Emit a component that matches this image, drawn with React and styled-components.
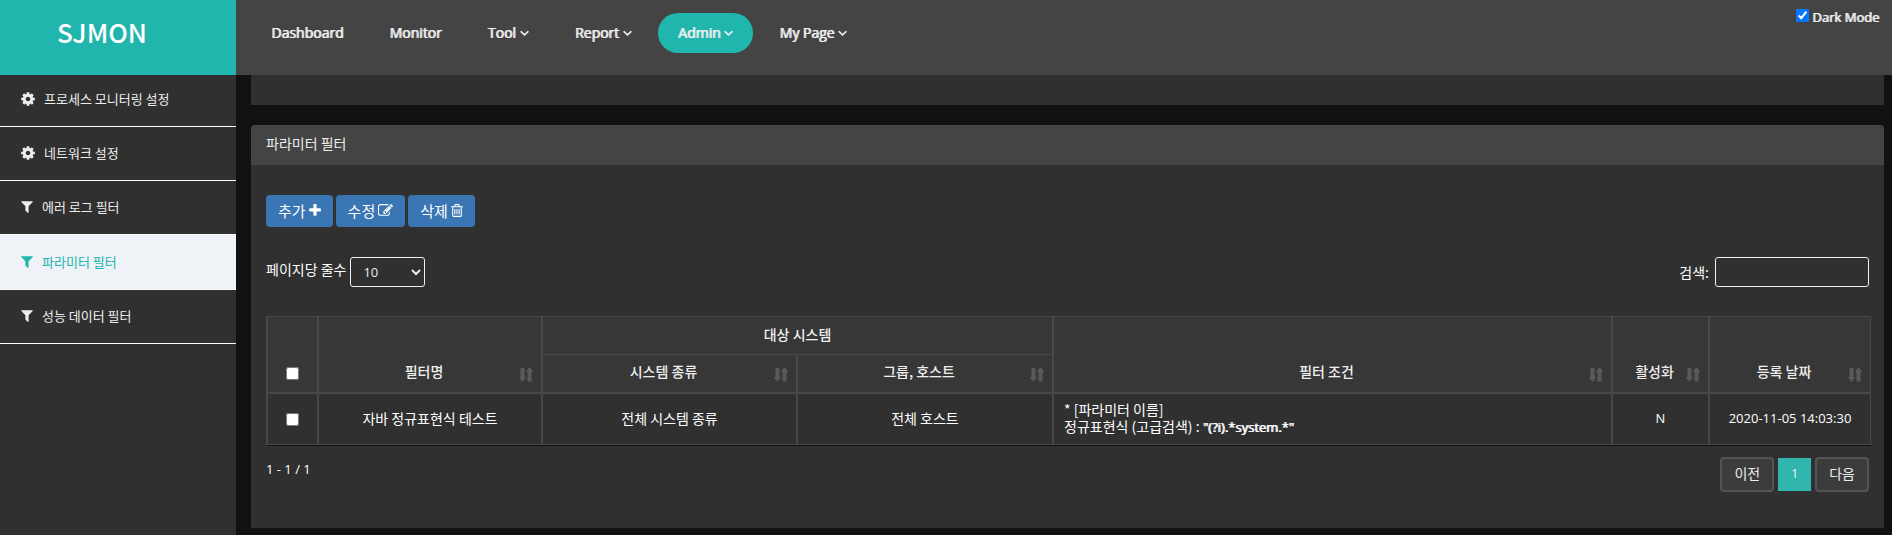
import React from "react";
import styled, { createGlobalStyle, css } from "styled-components";

const teal = "#20b5ad";
const latin = '"Open Sans", "Noto Sans CJK KR", sans-serif';
const korean = '"Noto Sans CJK KR", "Open Sans", sans-serif';

const GlobalStyle = createGlobalStyle`
  * { box-sizing: border-box; }
  body {
    margin: 0;
    background: #111;
    color: #fff;
    font: 14px/17px ${korean};
  }
  ul { list-style: none; margin: 0; padding: 0; }
  a { color: inherit; text-decoration: none; }
  svg { display: block; flex: none; fill: currentColor; }
`;

/* Icons: 1792 units to the em, cropped to the advance width of each glyph */
const shapes = {
  cog: [1536, "M1152 896q0-106-75-181t-181-75-181 75-75 181 75 181 181 75 181-75 75-181zm512-109v222q0 12-8 23t-20 13l-185 28q-19 54-39 91 35 50 107 138 10 12 10 25t-9 23q-27 37-99 108t-94 71q-12 0-26-9l-138-108q-44 23-91 38-16 136-29 186-7 28-36 28h-222q-14 0-24.5-8.5t-11.5-21.5l-28-184q-49-16-90-37l-141 107q-10 9-25 9-14 0-25-11-126-114-165-168-7-10-7-23 0-12 8-23 15-21 51-66.5t54-70.5q-27-50-41-99l-183-27q-13-2-21-12.5t-8-23.5v-222q0-12 8-23t19-13l186-28q14-46 39-92-40-57-107-138-10-12-10-24 0-10 9-23 26-36 98.5-107.5t94.5-71.5q13 0 26 10l138 107q44-23 91-38 16-136 29-186 7-28 36-28h222q14 0 24.5 8.5t11.5 21.5l28 184q49 16 90 37l142-107q9-9 24-9 13 0 25 10 129 119 165 170 7 8 7 22 0 12-8 23-15 21-51 66.5t-54 70.5q26 50 41 98l183 28q13 2 21 12.5t8 23.5z"],
  filter: [1408, "M1595 295q17 41-14 70l-493 493v742q0 42-39 59-13 5-25 5-27 0-45-19l-256-256q-19-19-19-45v-486l-493-493q-31-29-14-70 17-39 59-39h1280q42 0 59 39z"],
  plus: [1408, "M1600 736v192q0 40-28 68t-68 28h-416v416q0 40-28 68t-68 28h-192q-40 0-68-28t-28-68v-416h-416q-40 0-68-28t-28-68v-192q0-40 28-68t68-28h416v-416q0-40 28-68t68-28h192q40 0 68 28t28 68v416h416q40 0 68 28t28 68z"],
  edit: [1792, "M888 1184l116-116-152-152-116 116v56h96v96h56zm440-720q-16-16-33 1l-350 350q-17 17-1 33t33-1l350-350q17-17 1-33zm80 594v190q0 119-84.5 203.5t-203.5 84.5h-832q-119 0-203.5-84.5t-84.5-203.5v-832q0-119 84.5-203.5t203.5-84.5h832q63 0 117 25 15 7 18 23 3 17-9 29l-49 49q-14 14-32 8-23-6-45-6h-832q-66 0-113 47t-47 113v832q0 66 47 113t113 47h832q66 0 113-47t47-113v-126q0-13 9-22l64-64q15-15 35-7t20 29zm-96-738l288 288-672 672h-288v-288zm444 132l-92 92-288-288 92-92q28-28 68-28t68 28l152 152q28 28 28 68t-28 68z"],
  trash: [1408, "M704 736v576q0 14-9 23t-23 9h-64q-14 0-23-9t-9-23v-576q0-14 9-23t23-9h64q14 0 23 9t9 23zm256 0v576q0 14-9 23t-23 9h-64q-14 0-23-9t-9-23v-576q0-14 9-23t23-9h64q14 0 23 9t9 23zm256 0v576q0 14-9 23t-23 9h-64q-14 0-23-9t-9-23v-576q0-14 9-23t23-9h64q14 0 23 9t9 23zm128 724v-948h-896v948q0 22 7 40.5t14.5 27 10.5 8.5h832q3 0 10.5-8.5t14.5-27 7-40.5zm-672-1076h448l-48-117q-7-9-17-11h-317q-10 2-17 11zm928 32v64q0 14-9 23t-23 9h-96v948q0 83-47 143.5t-113 60.5h-832q-66 0-113-58.5t-47-141.5v-952h-96q-14 0-23-9t-9-23v-64q0-14 9-23t23-9h309l70-167q15-37 54-63t79-26h320q40 0 79 26t54 63l70 167h309q14 0 23 9t9 23z"],
  down: [1152, "M1395 736q0 13-10 23l-466 466q-10 10-23 10t-23-10l-466-466q-10-10-10-23t10-23l50-50q10-10 23-10t23 10l393 393 393-393q10-10 23-10t23 10l50 50q10 10 10 23z"],
};

function Icon({ name, size = 15 }) {
  const [advance, d] = shapes[name];
  return (
    <svg
      aria-hidden="true"
      width={Math.round((advance / 1792) * size)}
      height={size}
      viewBox={`${(1792 - advance) / 2} 0 ${advance} 1792`}
    >
      <path d={d} />
    </svg>
  );
}

function SortIcon() {
  return (
    <svg aria-hidden="true" width="14" height="15" viewBox="0 0 14 15">
      <path d="M1.5 1h4v9h1.7L3.5 15-.2 10h1.7zM8.5 14.5h4V5h1.7L10.5 0 6.8 5h1.7z" />
    </svg>
  );
}

const Page = styled.div`
  display: grid;
  grid-template-columns: 236px minmax(0, 1fr);
  grid-template-rows: 75px auto;
  min-height: 100vh;
`;

const Brand = styled.a`
  position: relative;
  z-index: 1;
  padding: 14px 0 0 57px;
  background: ${teal};
  font-size: 26px;
  font-weight: 500;
  line-height: 36px;
`;

const emboldened = css`
  text-shadow: 1px 0 0 currentColor;
`;

const TopBar = styled.header`
  position: relative;
  z-index: 1;
  display: flex;
  justify-content: space-between;
  align-items: flex-start;
  background: #444;
  color: #eee;
  font: 14px/20px ${latin};
  ${emboldened}
  svg { stroke: currentColor; stroke-width: 120; }
`;

const Menu = styled.nav`
  display: flex;
  gap: 6px;
  padding: 13px 15px;
`;

const MenuLink = styled.a`
  display: flex;
  align-items: center;
  gap: 4px;
  height: 40px;
  padding: 0 20px;
  border-radius: 20px;
  white-space: nowrap;
  ${(p) => p.$active && css`background: ${teal};`}
`;

const DarkMode = styled.label`
  display: flex;
  align-items: flex-start;
  gap: 3px;
  padding: 7px 13px 0 0;
  font-size: 13px;
`;

const Check = styled.input`
  width: 13px;
  height: 13px;
  margin: 0;
  vertical-align: middle;
  accent-color: #0075ff;
`;

const TopCheck = styled(Check)`
  margin-top: 2px;
`;

const Side = styled.aside`
  background: #303030;
  color: #eee;
`;

const SideList = styled.ul`
  margin-top: -2px;
`;

const SideLink = styled.a`
  display: flex;
  align-items: center;
  gap: 9px;
  height: 54px;
  padding: 0 0 2px 21px;
  border-bottom: 1px solid #fff;
  font-size: 13px;
  ${(p) => p.$active && css`
    height: 55px;
    background: #eff2f7;
    color: ${teal};
  `}
`;

const Main = styled.main`
  padding: 0 8px 7px 15px;
`;

const Panel = styled.section`
  margin-bottom: 20px;
  border-radius: 4px 4px 0 0;
  background: #303030;
  &:last-child { margin-bottom: 0; }
`;

const PreviousPanel = styled(Panel)`
  height: 30px;
  border-radius: 0;
`;

const PanelTitle = styled.h2`
  margin: 0;
  padding: 8px 15px 12px;
  border-radius: 4px 4px 0 0;
  background: #444;
  color: #eee;
  font-size: 14px;
  font-weight: 400;
  line-height: 20px;
`;

const PanelBody = styled.div`
  padding: 30px 15px 36px;
`;

const Actions = styled.div`
  display: flex;
  gap: 3px;
`;

const ActionButton = styled.button`
  display: flex;
  align-items: center;
  gap: 3px;
  height: 32px;
  padding: 0 12px 1px;
  border: 0;
  border-radius: 4px;
  background: #3a75b4;
  color: #fff;
  font: 15px/20px ${korean};
`;

const Controls = styled.div`
  display: flex;
  justify-content: space-between;
  margin: 30px 0 29px;
`;

const Field = styled.label`
  display: flex;
  align-items: flex-start;
  gap: ${(p) => p.$gap}px;
  line-height: ${(p) => p.$line}px;
`;

const PageSize = styled.select`
  width: 75px;
  height: 30px;
  padding: 0 0 0 8px;
  border: 1px solid #eee;
  border-radius: 3px;
  background: #303030;
  color: #eee;
  font: 13px/20px ${latin};
`;

const SearchBox = styled.input`
  width: 154px;
  height: 30px;
  padding: 0 8px;
  border: 1px solid #eee;
  border-radius: 3px;
  background: #303030;
  color: #eee;
  font: 13px/20px ${latin};
`;

const Table = styled.table`
  width: calc(100% + 2px);
  table-layout: fixed;
  border-collapse: separate;
  border-spacing: 0;
  border-left: 1px solid #484848;
  border-bottom: 1px solid #111;
`;

const HeadCell = styled.th`
  height: ${(p) => p.$height || 39}px;
  padding: 0 8px 10px 10px;
  border: solid #484848;
  border-width: 1px 1px ${(p) => (p.$group ? 0 : 1)}px;
  background: #373737;
  color: #eee;
  font-weight: 500;
  vertical-align: ${(p) => (p.$group ? "middle" : "bottom")};
  ${(p) => p.$group && css`padding: 0 8px 2px;`}
`;

const CheckHead = styled(HeadCell)`
  padding: 0 8px 12px;
`;

const SortLabel = styled.span`
  display: flex;
  align-items: flex-end;
  color: #eee;
  svg { color: #5a5a5a; }
`;

const SortText = styled.span`
  flex: 1;
  padding-bottom: 2px;
  text-align: center;
  white-space: nowrap;
`;

const Cell = styled.td`
  height: 52px;
  padding: 0 10px 2px;
  border: 1px solid #484848;
  text-align: ${(p) => (p.$left ? "left" : "center")};
`;

const Latin = styled.span`
  font: 13px/17px ${latin};
  white-space: nowrap;
`;

const Pattern = styled(Latin)`
  ${emboldened}
`;

const Footer = styled.div`
  display: flex;
  justify-content: space-between;
  align-items: flex-start;
  padding-top: 11px;
`;

const Count = styled(Latin)`
  padding-top: 4px;
`;

const Pager = styled.nav`
  display: flex;
  align-items: center;
  gap: 4px;
`;

const PageButton = styled.button`
  height: 35px;
  padding: 0 12px 2px;
  border: 2px solid #545454;
  border-radius: 4px;
  background: #3c3c3c;
  color: #eee;
  font: 14px/17px ${korean};
  ${(p) => p.$current && css`
    width: 33px;
    height: 33px;
    border: 0;
    border-radius: 0;
    background: #2fb5ad;
    font: 13px/17px ${latin};
  `}
`;

const menu = [
  { label: "Dashboard" },
  { label: "Monitor" },
  { label: "Tool", more: true },
  { label: "Report", more: true },
  { label: "Admin", more: true, active: true },
  { label: "My Page", more: true },
];

const sideItems = [
  { icon: "cog", label: "프로세스 모니터링 설정" },
  { icon: "cog", label: "네트워크 설정" },
  { icon: "filter", label: "에러 로그 필터" },
  { icon: "filter", label: "파라미터 필터", active: true },
  { icon: "filter", label: "성능 데이터 필터" },
];

const columns = [51, 224, 255, 256, 559, 97, 162];

function SortHead({ children, ...rest }) {
  return (
    <HeadCell scope="col" {...rest}>
      <SortLabel>
        <SortText>{children}</SortText>
        <SortIcon />
      </SortLabel>
    </HeadCell>
  );
}

export default function App() {
  return (
    <>
      <GlobalStyle />
      <Page>
        <Brand href="#">SJMON</Brand>
        <TopBar>
          <Menu>
            {menu.map((m) => (
              <MenuLink key={m.label} href="#" $active={m.active}>
                {m.label}
                {m.more && <Icon name="down" size={14} />}
              </MenuLink>
            ))}
          </Menu>
          <DarkMode>
            <TopCheck type="checkbox" defaultChecked />
            Dark Mode
          </DarkMode>
        </TopBar>
        <Side>
          <SideList>
            {sideItems.map((s) => (
              <li key={s.label}>
                <SideLink href="#" $active={s.active}>
                  <Icon name={s.icon} size={s.icon === "cog" ? 16 : 15} />
                  {s.label}
                </SideLink>
              </li>
            ))}
          </SideList>
        </Side>
        <Main>
          <PreviousPanel />
          <Panel>
            <PanelTitle>파라미터 필터</PanelTitle>
            <PanelBody>
              <Actions>
                <ActionButton>추가<Icon name="plus" /></ActionButton>
                <ActionButton>수정<Icon name="edit" /></ActionButton>
                <ActionButton>삭제<Icon name="trash" /></ActionButton>
              </Actions>
              <Controls>
                <Field $gap={4} $line={24}>
                  페이지당 줄수
                  <PageSize defaultValue="10">
                    <option>10</option>
                    <option>25</option>
                    <option>50</option>
                  </PageSize>
                </Field>
                <Field $gap={6} $line={30}>
                  검색:
                  <SearchBox type="search" />
                </Field>
              </Controls>
              <Table>
                <colgroup>
                  {columns.map((w) => <col key={w} width={w} />)}
                </colgroup>
                <thead>
                  <tr>
                    <CheckHead rowSpan={2}><Check type="checkbox" aria-label="전체 선택" /></CheckHead>
                    <SortHead rowSpan={2}>필터명</SortHead>
                    <HeadCell colSpan={2} $group $height={38}>대상 시스템</HeadCell>
                    <SortHead rowSpan={2}>필터 조건</SortHead>
                    <SortHead rowSpan={2}>활성화</SortHead>
                    <SortHead rowSpan={2}>등록 날짜</SortHead>
                  </tr>
                  <tr>
                    <SortHead>시스템 종류</SortHead>
                    <SortHead>그룹, 호스트</SortHead>
                  </tr>
                </thead>
                <tbody>
                  <tr>
                    <Cell><Check type="checkbox" aria-label="행 선택" /></Cell>
                    <Cell>자바 정규표현식 테스트</Cell>
                    <Cell>전체 시스템 종류</Cell>
                    <Cell>전체 호스트</Cell>
                    <Cell $left>
                      * [파라미터 이름]<br />
                      정규표현식 (고급검색) : <Pattern>"(?i).*system.*"</Pattern>
                    </Cell>
                    <Cell><Latin>N</Latin></Cell>
                    <Cell><Latin>2020-11-05 14:03:30</Latin></Cell>
                  </tr>
                </tbody>
              </Table>
              <Footer>
                <Count>1 - 1 / 1</Count>
                <Pager>
                  <PageButton>이전</PageButton>
                  <PageButton $current>1</PageButton>
                  <PageButton>다음</PageButton>
                </Pager>
              </Footer>
            </PanelBody>
          </Panel>
        </Main>
      </Page>
    </>
  );
}
